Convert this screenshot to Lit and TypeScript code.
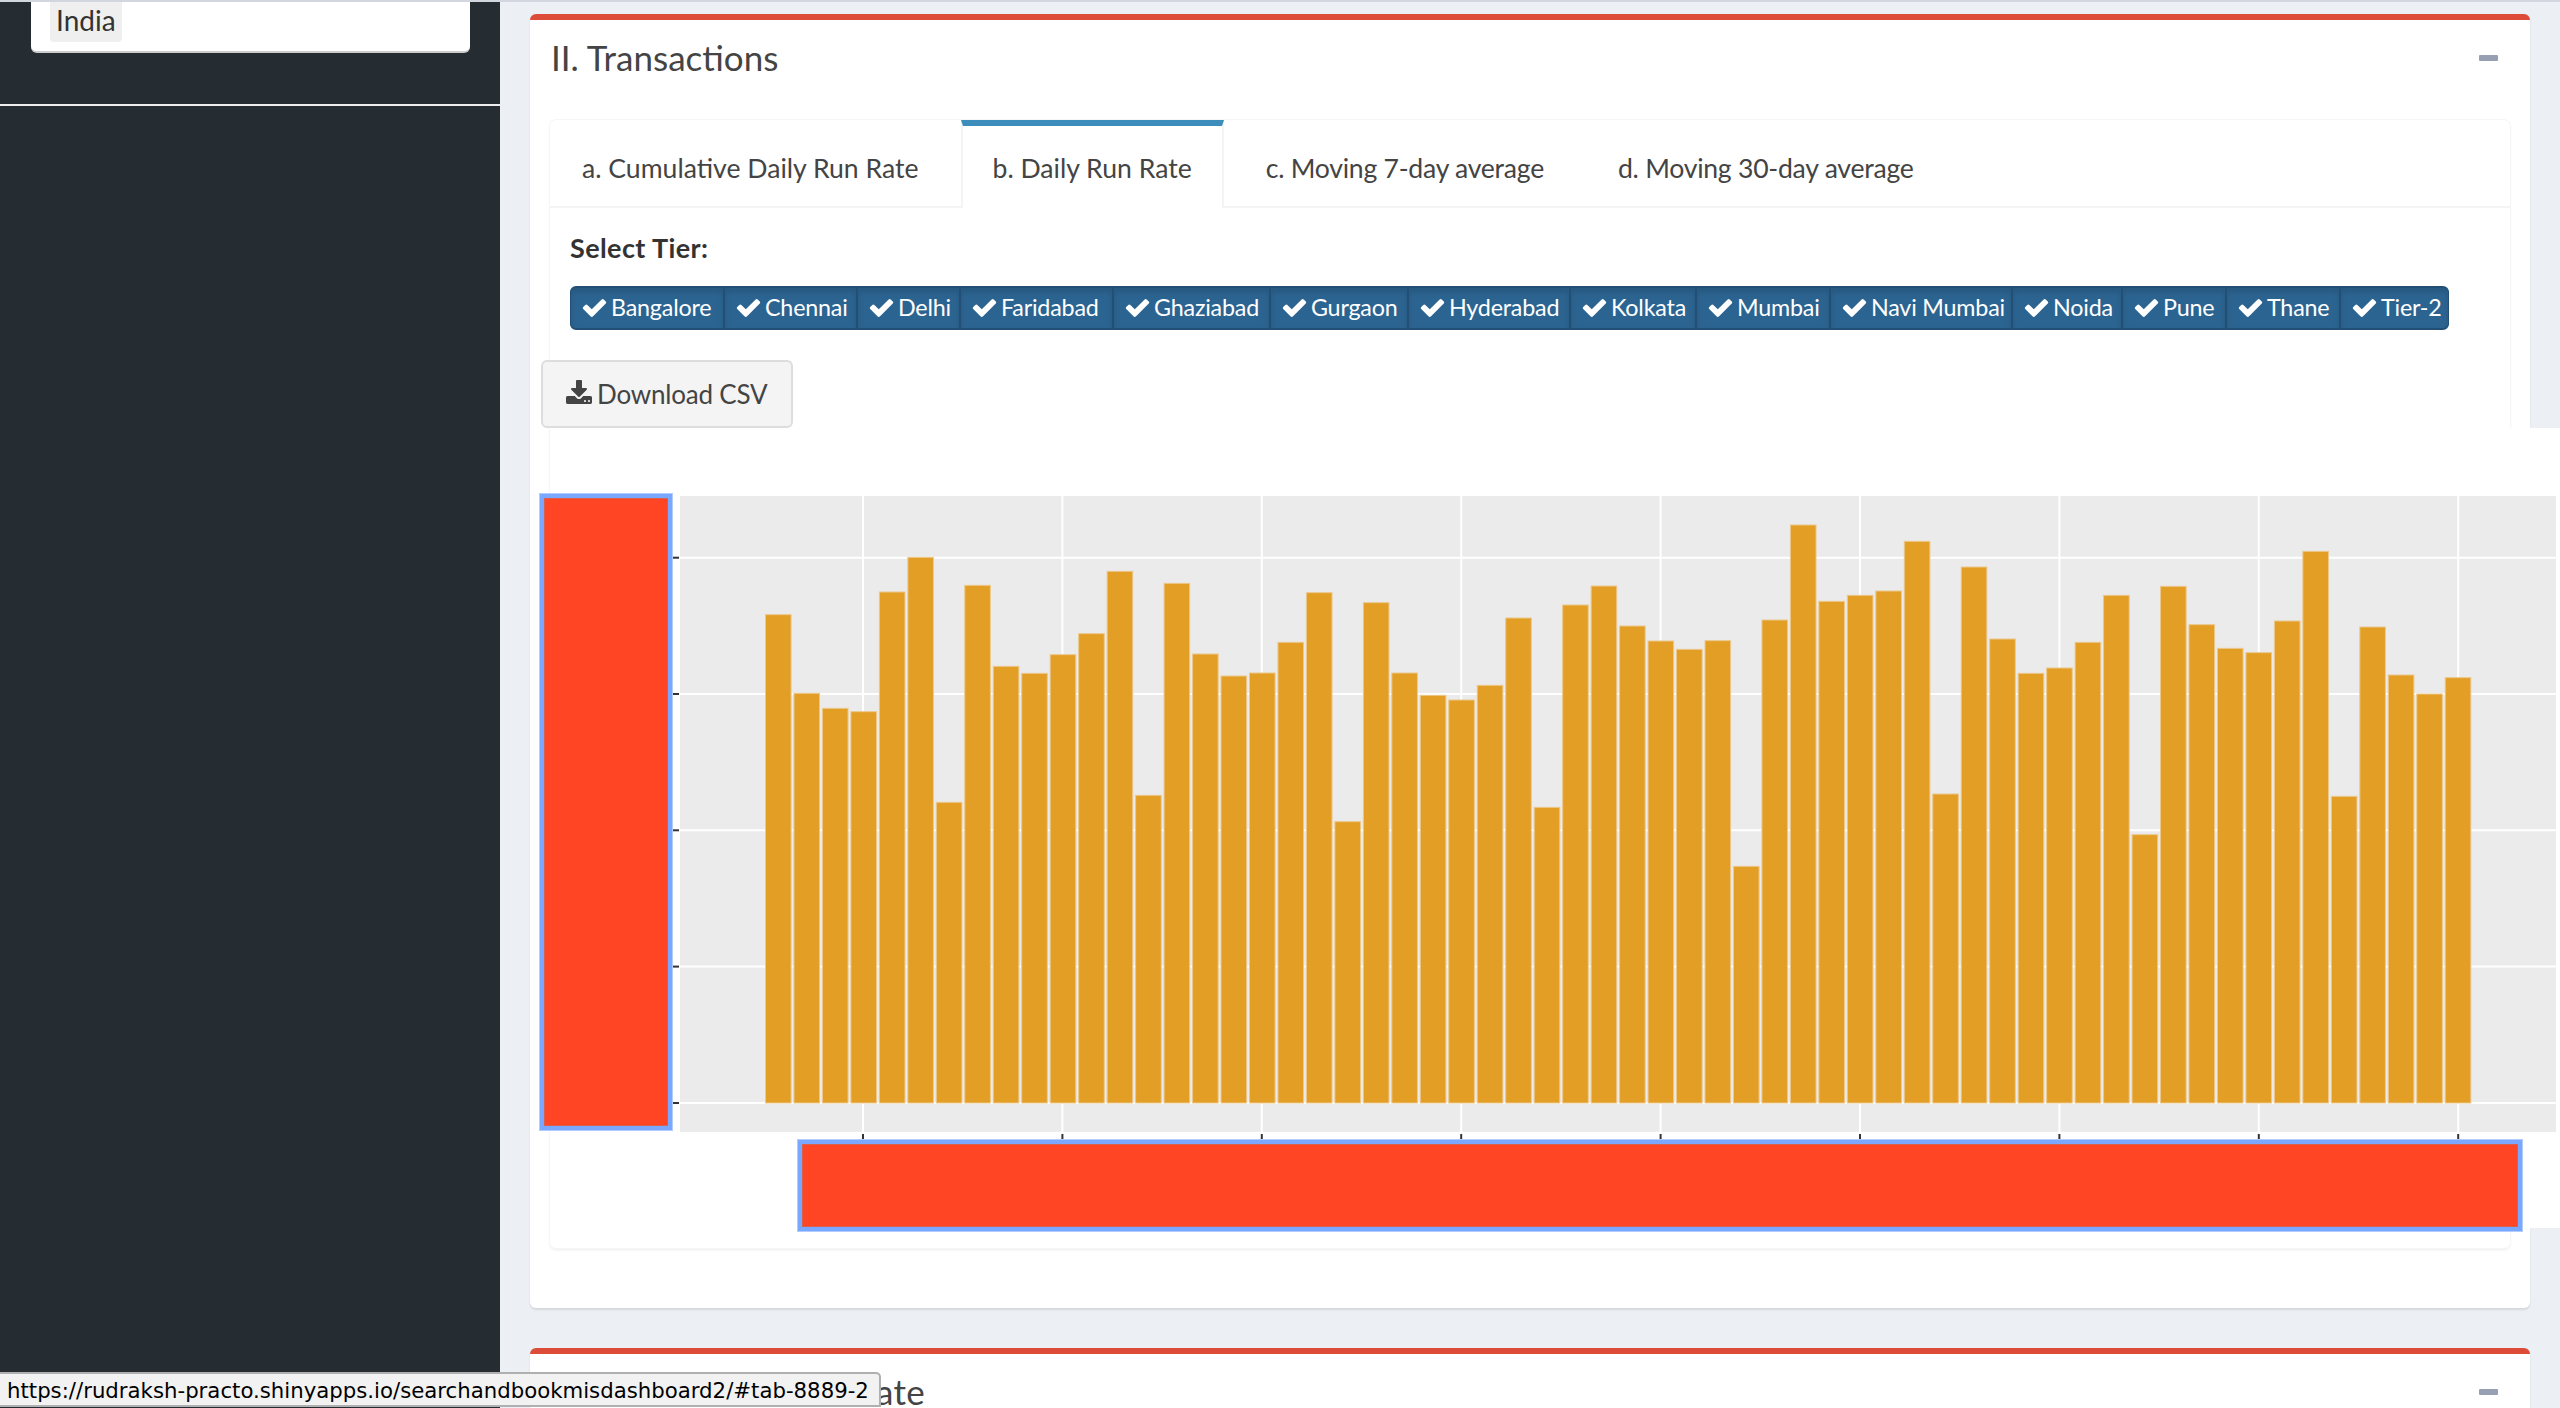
import { LitElement, html, css, svg } from 'lit'
import { customElement } from 'lit/decorators.js'

const CHECK = 'M1671 566q0 40-28 68l-724 724-136 136q-28 28-68 28t-68-28l-136-136-362-362q-28-28-28-68t28-68l136-136q28-28 68-28t68 28l294 295 656-657q28-28 68-28t68 28l136 136q28 28 28 68z'
const DOWNLOAD = 'M1344 1344q0-26-19-45t-45-19-45 19-19 45 19 45 45 19 45-19 19-45zm256 0q0-26-19-45t-45-19-45 19-19 45 19 45 45 19 45-19 19-45zm128-224v320q0 40-28 68t-68 28h-1472q-40 0-68-28t-28-68v-320q0-40 28-68t68-28h465l135 136q58 56 136 56t136-56l136-136h464q40 0 68 28t28 68zm-325-569q17 41-14 70l-448 448q-18 19-45 19t-45-19l-448-448q-31-29-14-70 17-39 59-39h256v-448q0-26 19-45t45-19h256q26 0 45 19t19 45v448h256q42 0 59 39z'

const TIERS: [string, number][] = [
  ['Bangalore', 154], ['Chennai', 133], ['Delhi', 103], ['Faridabad', 153],
  ['Ghaziabad', 157], ['Gurgaon', 138], ['Hyderabad', 162], ['Kolkata', 126],
  ['Mumbai', 134], ['Navi Mumbai', 182], ['Noida', 110], ['Pune', 104],
  ['Thane', 114], ['Tier-2', 109],
]

const TABS: [string, number][] = [
  ['a. Cumulative Daily Run Rate', 0],
  ['b. Daily Run Rate', 0],
  ['c. Moving 7-day average', -0.25],
  ['d. Moving 30-day average', -0.25],
]

// bar tops, read off the chart (3x zoom units from y=520)
const TOPS = [
  284, 520, 565, 575, 216, 112, 847, 196, 439, 460, 404, 341, 154, 826, 190, 402, 468, 459, 367, 218,
  905, 248, 459, 526, 540, 496, 294, 862, 255, 198, 318, 363, 388, 362, 1039, 300, 15, 244, 226, 213,
  64, 822, 141, 357, 460, 444, 367, 226, 944, 199, 314, 385, 398, 303, 94, 829, 321, 465, 522, 473,
]

const BASE_Y = 1103
const H_LINES = [557.7, 694, 830.3, 966.6, 1103]
const V_LINES = Array.from({ length: 9 }, (_, i) => 863 + i * 199.4)

@customElement('app-root')
export class AppRoot extends LitElement {
  static styles = css`
    :host {
      display: block;
      position: relative;
      width: 2560px;
      height: 1408px;
      overflow: hidden;
      background: #ecf0f5;
      font-family: Lato, "Noto Sans", sans-serif;
      color: #333;
    }

    .top-line {
      height: 2px;
      background: #d2d6de;
    }

    .shell {
      display: flex;
      height: 1406px;
    }

    .sidebar {
      width: 500px;
      flex: none;
      background: #252d33;
    }

    .filter {
      box-sizing: border-box;
      height: 51px;
      margin: 0 30px 0 31px;
      padding: 0 19px;
      background: #fff;
      border-bottom: 2px solid #ccc;
      border-radius: 0 0 6px 6px;
    }

    .chip {
      display: block;
      width: 72px;
      height: 40px;
      padding-left: 6px;
      box-sizing: border-box;
      background: #efefef;
      border-radius: 0 0 4px 4px;
      font-size: 28px;
      line-height: 36px;
      color: #333;
    }

    .rule {
      height: 2px;
      margin-top: 51px;
      background: #eee;
    }

    .main {
      flex: 1;
      min-width: 0;
      padding: 12px 30px 0;
    }

    .box {
      background: #fff;
      border-top: 6px solid #dd4b39;
      border-radius: 6px;
      box-shadow: 0 2px 2px rgba(0, 0, 0, 0.1);
      margin-bottom: 40px;
      padding-bottom: 60px;
    }

    .box-header {
      display: flex;
      align-items: center;
      justify-content: space-between;
      box-sizing: border-box;
      height: 76px;
      margin-bottom: 24px;
      padding: 0 32px 0 21px;
    }

    .box-title {
      margin: 0 0 3px;
      font-size: 35px;
      font-weight: 400;
      color: #444;
    }

    .box-title.next {
      letter-spacing: 0.25px;
    }

    .minus {
      width: 19px;
      height: 6px;
      border-radius: 1px;
      background: #97a0b3;
    }

    .tab-box {
      margin: 0 20px;
      background: #fff;
      border-radius: 6px;
      box-shadow: 0 0 0 1px #f6f6f6, 0 2px 3px rgba(0, 0, 0, 0.08);
      padding-bottom: 20px;
    }

    .tabs {
      display: flex;
      height: 88px;
      box-sizing: border-box;
      border-bottom: 2px solid #f4f4f4;
    }

    .tab {
      display: flex;
      align-items: center;
      box-sizing: border-box;
      height: 88px;
      margin-right: 10px;
      padding: 2px 30px 0;
      border-top: 6px solid transparent;
      border-left: 2px solid transparent;
      border-right: 2px solid transparent;
      font-size: 26.6px;
      color: #444;
      white-space: nowrap;
    }

    .tab.active {
      border-top-color: #3c8dbc;
      border-left-color: #f4f4f4;
      border-right-color: #f4f4f4;
      background: #fff;
    }

    .pane {
      padding: 28px 20px 0;
    }

    .label {
      font-size: 27px;
      font-weight: 700;
      letter-spacing: 0.4px;
      line-height: 24px;
      color: #333;
    }

    .group {
      display: flex;
      height: 44px;
      margin-top: 26px;
      width: fit-content;
    }

    .seg {
      display: flex;
      align-items: center;
      box-sizing: border-box;
      gap: 3px;
      padding: 0 0 2px 10px;
      background: #2c6491;
      border: 2px solid #224f75;
      border-left-width: 1px;
      border-right-width: 1px;
      box-shadow: inset 0 4px 6px rgba(0, 0, 0, 0.125);
      color: #fff;
      font-size: 23.3px;
      letter-spacing: -0.2px;
      white-space: nowrap;
    }

    .seg:first-child {
      border-radius: 6px 0 0 6px;
    }

    .seg:last-child {
      border-radius: 0 6px 6px 0;
    }

    .seg svg {
      width: 27px;
      height: 27px;
      flex: none;
      fill: #fff;
    }

    .download {
      display: flex;
      align-items: center;
      box-sizing: border-box;
      gap: 4px;
      width: 252px;
      height: 68px;
      margin: 30px 0 0 -29px;
      padding-left: 22px;
      background: #f4f4f4;
      border: 2px solid #ddd;
      border-radius: 6px;
      font-size: 26px;
      letter-spacing: -0.2px;
      color: #444;
    }

    .download svg {
      width: 28px;
      height: 28px;
      flex: none;
      fill: #444;
    }

    .plot {
      height: 800px;
      margin-left: -19px;
      width: 2009px;
      background: #fff;
    }

    .plot svg {
      display: block;
      overflow: visible;
    }

    .status {
      position: absolute;
      left: 0;
      bottom: 1px;
      box-sizing: border-box;
      width: 881px;
      height: 35px;
      padding-left: 7px;
      background: #f2f2f2;
      border: 2px solid #b0b0b0;
      border-left: 0;
      border-radius: 0 5px 0 0;
      font-family: "DejaVu Sans", sans-serif;
      font-size: 21.25px;
      line-height: 33px;
      color: #000;
      white-space: nowrap;
    }
  `

  private chart() {
    return svg`
      <svg width="2009" height="800" viewBox="551 428 2009 800">
        <rect x="680" y="496" width="1876" height="636" fill="#ebebeb"></rect>
        ${H_LINES.map(y => svg`
          <line x1="680" x2="2556" y1=${y} y2=${y} stroke="#fff" stroke-width="2"></line>
          <line x1="673" x2="679" y1=${y} y2=${y} stroke="#333" stroke-width="2"></line>
        `)}
        ${V_LINES.map(x => svg`
          <line y1="496" y2="1132" x1=${x} x2=${x} stroke="#fff" stroke-width="2"></line>
          <line y1="1134" y2="1140" x1=${x} x2=${x} stroke="#333" stroke-width="2"></line>
        `)}
        ${TOPS.map((v, i) => {
          const top = 520 + v / 3
          return svg`<rect x=${765.5 + i * 28.47} y=${top} width="25.6" height=${BASE_Y - top}
            fill="#e39e25" stroke="#ecc88c" stroke-width="1"></rect>`
        })}
        <rect x="541.5" y="495.5" width="129" height="633" fill="#ff4524" stroke="#7aa7ff" stroke-width="5"></rect>
        <rect x="539.5" y="493.5" width="133" height="637" fill="none" stroke="#b3ccff" stroke-width="1"></rect>
        <rect x="544.5" y="498.5" width="123" height="627" fill="none" stroke="#d9604f" stroke-width="1"></rect>
        <rect x="799.5" y="1141.5" width="1721" height="88" fill="#ff4524" stroke="#7aa7ff" stroke-width="5"></rect>
        <rect x="797.5" y="1139.5" width="1725" height="92" fill="none" stroke="#b3ccff" stroke-width="1"></rect>
        <rect x="802.5" y="1144.5" width="1715" height="82" fill="none" stroke="#d9604f" stroke-width="1"></rect>
      </svg>
    `
  }

  render() {
    return html`
      <div class="top-line"></div>
      <div class="shell">
        <aside class="sidebar">
          <div class="filter"><span class="chip">India</span></div>
          <div class="rule"></div>
        </aside>
        <main class="main">
          <section class="box">
            <header class="box-header">
              <h3 class="box-title">II. Transactions</h3>
              <div class="minus"></div>
            </header>
            <div class="tab-box">
              <nav class="tabs">
                ${TABS.map(([t, ls], i) => html`<div class="tab ${i === 1 ? 'active' : ''}" style="letter-spacing:${ls}px">${t}</div>`)}
              </nav>
              <div class="pane">
                <div class="label">Select Tier:</div>
                <div class="group">
                  ${TIERS.map(([name, w]) => html`
                    <div class="seg" style="width:${w}px">
                      <svg viewBox="0 0 1792 1792"><path d=${CHECK}></path></svg>${name}
                    </div>
                  `)}
                </div>
                <div class="download">
                  <svg viewBox="0 0 1792 1792"><path d=${DOWNLOAD}></path></svg>Download CSV
                </div>
                <div class="plot">${this.chart()}</div>
              </div>
            </div>
          </section>
          <section class="box">
            <header class="box-header">
              <h3 class="box-title next">III. Cumulative Run Rate</h3>
              <div class="minus"></div>
            </header>
          </section>
        </main>
      </div>
      <div class="status">https://rudraksh-practo.shinyapps.io/searchandbookmisdashboard2/#tab-8889-2</div>
    `
  }
}
